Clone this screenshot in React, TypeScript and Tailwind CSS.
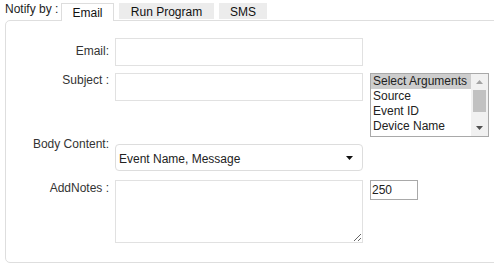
import { useState } from "react";

const args = ["Select Arguments", "Source", "Event ID", "Device Name"];

function ArgumentList() {
  return (
    <div className="flex h-[64px] w-[119px] border border-[#a9a9a9] bg-white overflow-hidden">
      <div className="w-[100px]">
        {args.map((a, i) => (
          <div
            key={a}
            className={`h-[15px] leading-[15px] pl-[2px] whitespace-nowrap text-[#222] ${i === 0 ? "bg-[#cdcdcd]" : ""}`}
          >
            {a}
          </div>
        ))}
      </div>
      {/* scrollbar */}
      <div className="w-[17px] bg-[#f1f1f1] flex flex-col">
        <div className="h-[16px] flex items-center justify-center">
          <svg width="7" height="4" viewBox="0 0 7 4">
            <path d="M0 4 L3.5 0 L7 4 Z" fill="#a3a3a3" />
          </svg>
        </div>
        <div className="h-[22px] mx-[2px] bg-[#c1c1c1]" />
        <div className="flex-1" />
        <div className="h-[16px] flex items-center justify-center">
          <svg width="7" height="4" viewBox="0 0 7 4">
            <path d="M0 0 L7 0 L3.5 4 Z" fill="#505050" />
          </svg>
        </div>
      </div>
    </div>
  );
}

export default function App() {
  const [tab] = useState("Email");
  const tabs = [
    { name: "Email", w: "w-[53px]" },
    { name: "Run Program", w: "w-[95px]" },
    { name: "SMS", w: "w-[48px]" },
  ];

  return (
    <div className="w-[494px] h-[268px] bg-white overflow-hidden font-['Liberation_Sans',Arial,sans-serif] text-[12px] text-[#333]">
      {/* tab strip */}
      <div className="flex h-[20px] pl-[5px]">
        <span className="w-[56px] mt-[2px] leading-[14px] whitespace-nowrap text-[#222]">Notify by :</span>
        <div className="flex gap-[5px] mt-[3px]">
          {tabs.map((t) =>
            t.name === tab ? (
              <div
                key={t.name}
                className={`relative z-10 ${t.w} h-[18px] pt-[2px] text-center leading-[14px] bg-white border border-b-0 border-[#dddddd] text-[#111]`}
              >
                {t.name}
              </div>
            ) : (
              <div key={t.name} className={`${t.w} h-[16px] pt-[2px] text-center leading-[14px] bg-[#ececec] text-[#111]`}>
                {t.name}
              </div>
            )
          )}
        </div>
      </div>

      {/* panel */}
      <div className="ml-[5px] w-[500px] h-[243px] border border-[#dedede] rounded-[5px] pt-[17px]">
        <div className="flex items-start">
          <label className="w-[103px] mt-[6px] text-right leading-[14px]">Email:</label>
          <input className="ml-[6px] w-[248px] h-[28px] border border-[#e1e1e1] outline-none" />
        </div>

        <div className="flex items-start mt-[7px]">
          <label className="w-[103px] text-right leading-[14px]">Subject :</label>
          <input className="ml-[6px] w-[248px] h-[28px] border border-[#e1e1e1] outline-none" />
          <div className="ml-[7px]">
            <ArgumentList />
          </div>
        </div>

        <div className="flex items-start mt-[7px]">
          <label className="w-[103px] -mt-[7px] text-right leading-[14px]">Body Content:</label>
          <div className="ml-[6px] w-[248px] h-[27px] border border-[#dddddd] rounded-[4px] flex items-center justify-between pl-[3px] pr-[9px] pt-[2px]">
            <span className="leading-[14px] text-[#222]">Event Name, Message</span>
            <svg width="7" height="4" viewBox="0 0 7 4" className="-mt-[2px]">
              <path d="M0 0 L7 0 L3.5 4 Z" fill="#111" />
            </svg>
          </div>
        </div>

        <div className="flex items-start mt-[9px]">
          <label className="w-[103px] mt-[1px] text-right leading-[14px]">AddNotes :</label>
          <textarea className="ml-[6px] w-[248px] h-[63px] border border-[#e1e1e1] outline-none resize" />
          <input
            defaultValue="250"
            className="ml-[7px] w-[48px] h-[20px] border border-[#a9a9a9] pl-[1px] text-[12px] leading-[14px] text-[#222] outline-none"
          />
        </div>
      </div>
    </div>
  );
}
